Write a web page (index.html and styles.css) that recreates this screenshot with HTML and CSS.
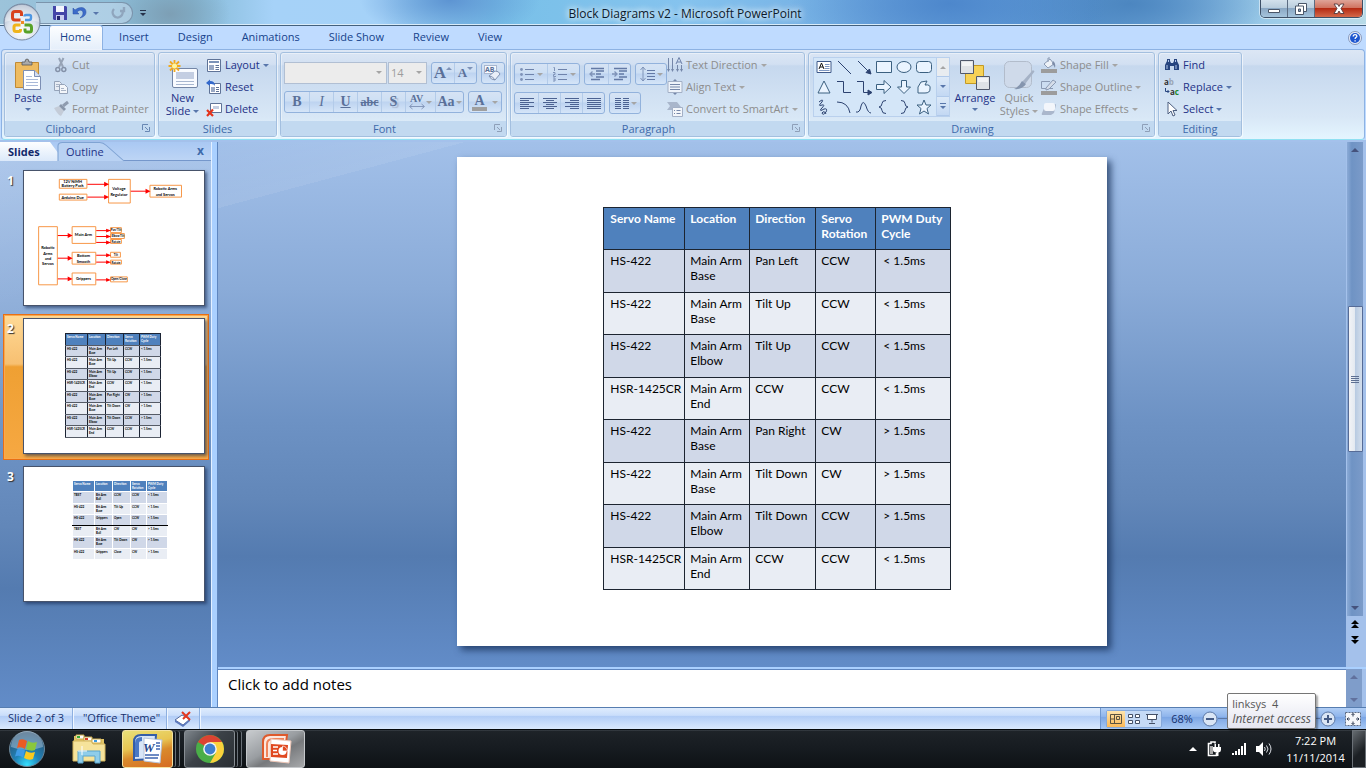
FILE: index.html
```html
<!DOCTYPE html>
<html lang="en">
<head>
    <meta charset="UTF-8">
    <meta name="viewport" content="width=device-width, initial-scale=1.0">
    <title>Block Diagrams v2 - Microsoft PowerPoint</title>
    <link rel="stylesheet" href="styles.css">
</head>
<body>
    <!-- Title bar -->
    <header class="titlebar">
        <div class="quick-access">
            <button class="qa-btn" aria-label="Save"><svg width="14" height="14" viewBox="0 0 14 14"><path d="M0 0h13l1 1v13H1l-1-1z" fill="#4345a8"/><path d="M3 0h8v6H3z" fill="#f4f5fd"/><path d="M3 9h8v5H3z" fill="#c9cdf0"/><path d="M4 10h3v4H4z" fill="#23256e"/></svg></button>
            <button class="qa-btn" aria-label="Undo"><svg width="14" height="14" viewBox="0 0 14 14"><path d="M0 2v6h6L4 6c3-3 6-2 6 1 0 2-1 3-3 5 4-1 6-3 6-6 0-5-6-6-11-2z" fill="#3c6cc9" stroke="#2a4fa5" stroke-width=".5"/></svg></button>
            <span class="caret"></span>
            <button class="qa-btn redo" aria-label="Redo" disabled><svg width="14" height="14" viewBox="0 0 14 14"><path d="M3 3a5 5 0 1 0 8 1M13 1v4H9" fill="none" stroke="#8fa5bd" stroke-width="2.4"/></svg></button>
        </div>
        <button class="qa-more" aria-label="Customize Quick Access Toolbar"><span class="bar"></span><span class="caret dark"></span></button>
        <h1 class="window-title">Block Diagrams v2 - Microsoft PowerPoint</h1>
        <div class="window-buttons">
            <button class="win-btn" aria-label="Minimize"><svg width="14" height="12" viewBox="0 0 14 12"><path d="M1.500 6.500h11v3h-11z" fill="#fff" stroke="#4a5668"/></svg></button>
            <button class="win-btn" aria-label="Restore"><svg width="14" height="12" viewBox="0 0 14 12"><path d="M4.500.5h8v8h-8z" fill="#fff" stroke="#4a5668"/><path d="M1.500 3h8v8.500h-8z" fill="#fff" stroke="#4a5668"/><path d="M4.500 6h2v2.500h-2z" fill="#8fa5c0" stroke="#4a5668"/></svg></button>
            <button class="win-btn close" aria-label="Close"><svg width="14" height="12" viewBox="0 0 14 12"><path d="M2 1h3.500L7 3.500 8.500 1H12L9 5.500l3 5H8.500L7 8l-1.500 2.500H2l3-5z" fill="#fff" stroke="#54383c" stroke-width=".9"/></svg></button>
        </div>
    </header>

    <button class="office-btn" aria-label="Office Button">
        <svg width="38" height="38" viewBox="0 0 38 38">
            <defs>
                <radialGradient id="orb" cx=".5" cy=".75" r=".7"><stop offset="0" stop-color="#fff"/><stop offset=".6" stop-color="#dbe2ec"/><stop offset="1" stop-color="#9faec4"/></radialGradient>
            </defs>
            <circle cx="19" cy="19" r="18" fill="url(#orb)" stroke="#77879f"/>
            <path d="M2 19a17 17 0 0 1 34 0c-8-3-26-3-34 0z" fill="#fff" opacity=".4"/>
            <g fill="none" stroke-width="3">
                <path d="M17.500 17H12q-2.500 0-2.500-2.500V11q0-2.500 2.500-2.500h4.500q2 0 2 2V13" stroke="#d8411d"/>
                <path d="M22 17h4q2 0 2-2v-1.500q0-1.500-1.500-1.500H23q-1.500 0-1.500 1.500" stroke="#4f97e2" stroke-width="2.400"/>
                <path d="M17.500 22H13q-2 0-2 2v2.500q0 2 2 2h3q1.500 0 1.500-1.500v-1" stroke="#f0b41a"/>
                <path d="M21.500 22H26q2.500 0 2.500 2.500V27q0 2-2 2H24q-2 0-2-2v-1.500" stroke="#58a228"/>
            </g>
            <path d="M18 18h3v3h-3z" fill="#f08a28"/>
        </svg>
    </button>

    <!-- Ribbon tabs -->
    <nav class="tabs">
        <a href="#" class="tab active">Home</a>
        <a href="#" class="tab">Insert</a>
        <a href="#" class="tab">Design</a>
        <a href="#" class="tab">Animations</a>
        <a href="#" class="tab">Slide Show</a>
        <a href="#" class="tab">Review</a>
        <a href="#" class="tab">View</a>
        <button class="help-btn" aria-label="Help"><svg width="14" height="14" viewBox="0 0 14 14"><circle cx="7" cy="7" r="6.500" fill="#e6eefb" stroke="#8798bb"/><circle cx="7" cy="7" r="5" fill="#1d55cf"/><path d="M5.200 5.600q0-2 1.900-2 1.800 0 1.800 1.500 0 1-1.200 1.500-.6.300-.6 1.300M7.100 9.200v1.400" fill="none" stroke="#fff" stroke-width="1.300"/></svg></button>
    </nav>

    <!-- Ribbon -->
    <section class="ribbon">
        <div class="group clipboard">
            <div class="group-body">
                <button class="big-btn">
                    <svg width="28" height="32" viewBox="0 0 28 32"><path d="M1.500 3.500h23v25h-23z" fill="#eebb60" stroke="#c08a35"/><path d="M8 6V3h3q0-3 2-3t2 3h3v3z" fill="#aaa" stroke="#555" stroke-width=".8"/><path d="M9.500 11.500h11l6 6v13h-17z" fill="#fff" stroke="#7d8fb4"/><path d="M20.500 11.500v6h6" fill="#d5def0" stroke="#7d8fb4"/><path d="M12 17.500h6M12 20.500h12M12 23.500h12M12 26.500h12" stroke="#a9b9d8"/></svg>
                    <span>Paste</span><span class="caret"></span>
                </button>
                <div class="rows">
                    <button class="row-btn" disabled><svg class="ico" viewBox="0 0 16 16"><path d="M6 1l4 9M10.500 1L6 10" stroke="#97a3b6" stroke-width="2"/><circle cx="4.800" cy="12.500" r="2" fill="none" stroke="#8491a8" stroke-width="1.500"/><circle cx="10.800" cy="12.500" r="2" fill="none" stroke="#8491a8" stroke-width="1.500"/></svg>Cut</button>
                    <button class="row-btn" disabled><svg class="ico" viewBox="0 0 16 16"><path d="M1.500 2.500h5l2 2v7h-7z" fill="#e8edf5" stroke="#95a3b9"/><path d="M6.500 5.500h5l3 3v6h-8z" fill="#f3f6fa" stroke="#95a3b9"/><path d="M3 5.500h3M3 7.500h3M8 9.500h3M8 11.500h5" stroke="#a9b4c6"/></svg>Copy</button>
                    <button class="row-btn" disabled><svg class="ico" viewBox="0 0 16 16"><path d="M1 7l5-2 5 5-3 5q-3-1-7-8z" fill="#c4ccd8"/><path d="M6 5l5 5 2-2-5-5z" fill="#8996aa"/><path d="M10 5l5-4" stroke="#8f9cb0" stroke-width="3"/></svg>Format Painter</button>
                </div>
            </div>
            <div class="group-label">Clipboard<button class="launcher" aria-label="Clipboard options"><svg width="8" height="8" viewBox="0 0 8 8"><path d="M.5 6V.5H6M3 3l3 3M7.500 3v4.500H3" fill="none" stroke="#6887b3"/></svg></button></div>
        </div>

        <div class="group slides">
            <div class="group-body">
                <button class="big-btn">
                    <svg width="30" height="30" viewBox="0 0 30 30"><rect x="4.500" y="8.500" width="25" height="19" rx="1.500" fill="#f9fbff" stroke="#7486a6"/><path d="M8 12h18v7H8z" fill="#c4cee2"/><path d="M8 21.500h18M8 24.500h18" stroke="#a8b7d0"/><path d="M6.500 0v12M.5 6h12M2 1.500l9 9M11 1.500l-9 9" stroke="#f2a91d" stroke-width="1.800"/><circle cx="6.500" cy="6" r="2.500" fill="#fff59e"/></svg>
                    <span>New</span><span>Slide <span class="caret"></span></span>
                </button>
                <div class="rows">
                    <button class="row-btn"><svg class="ico" viewBox="0 0 16 16"><path d="M1.500 2.500h13v12h-13z" fill="#fff" stroke="#5f7397"/><path d="M3 4h10v2H3z" fill="#7c93b8"/><path d="M3 8h5v5H3z" fill="#9aa9c4"/><path d="M9.500 8.500H13M9.500 10.500H13M9.500 12.500H13" stroke="#5f7397"/></svg>Layout <span class="caret"></span></button>
                    <button class="row-btn"><svg class="ico" viewBox="0 0 16 16"><path d="M3.500 4.500h11v10h-11z" fill="#fff" stroke="#5f7397"/><path d="M5 8h4v5H5z" fill="#9aa9c4"/><path d="M10 8.500h3M10 10.500h3M10 12.500h3" stroke="#5f7397"/><path d="M0 4l4-3.500V2q5 0 5 5Q8 4.500 4 5v2z" fill="#3268cb"/></svg>Reset</button>
                    <button class="row-btn"><svg class="ico" viewBox="0 0 16 16"><path d="M4.500 2.500h11v9h-11z" fill="#fff" stroke="#5f7397"/><path d="M7 5h6v3H7z" fill="#c4cee2"/><path d="M1 9l6 6M7 8.500L1 15" stroke="#e3331b" stroke-width="2.200"/></svg>Delete</button>
                </div>
            </div>
            <div class="group-label">Slides</div>
        </div>

        <div class="group font">
            <div class="group-body stacked">
                <div class="tool-line">
                    <div class="combos">
                        <span class="combo name"><select aria-label="Font" disabled><option></option></select></span>
                        <span class="combo size"><select aria-label="Font Size" disabled><option>14</option></select></span>
                    </div>
                    <div class="btn-set">
                        <button class="tool" aria-label="Grow Font" disabled><span class="serif grow">A</span><span class="tri up"></span></button>
                        <button class="tool" aria-label="Shrink Font" disabled><span class="serif shrink">A</span><span class="tri down"></span></button>
                    </div>
                    <div class="btn-set">
                        <button class="tool" aria-label="Clear Formatting" disabled><svg width="18" height="18" viewBox="0 0 18 18"><rect x=".5" y="1.500" width="12" height="8" fill="#f6f8fc" stroke="#a8b7d0"/><text x="1" y="8" class="tiny-letters">AB</text><path d="M5 12l6-5q4 0 5 3l-5 6q-4 0-6-4z" fill="#e9eef8" stroke="#8192b2"/><path d="M5 12q4 0 6 4" fill="none" stroke="#8192b2"/></svg></button>
                    </div>
                </div>
                <div class="tool-line">
                    <div class="btn-set">
                        <button class="tool serif" disabled><b>B</b></button>
                        <button class="tool serif" disabled><i>I</i></button>
                        <button class="tool serif" disabled><u>U</u></button>
                        <button class="tool serif strike" disabled><s>abc</s></button>
                        <button class="tool serif shadow" disabled><b>S</b></button>
                        <button class="tool wide" aria-label="Character Spacing" disabled><svg width="16" height="16" viewBox="0 0 16 16"><text x="1" y="8" class="spacing-letters">AV</text><path d="M1 12.500h14M3.500 10l-3 2.500 3 2.500M12.500 10l3 2.500-3 2.500" fill="none" stroke="#8598bb"/></svg><span class="caret"></span></button>
                        <button class="tool wide serif case" disabled><span>Aa</span><span class="caret"></span></button>
                    </div>
                    <div class="btn-set">
                        <button class="tool color" aria-label="Font Color" disabled><span class="serif color-a">A</span><span class="caret"></span></button>
                    </div>
                </div>
            </div>
            <div class="group-label">Font<button class="launcher off" aria-label="Font options"><svg width="8" height="8" viewBox="0 0 8 8"><path d="M.5 6V.5H6M3 3l3 3M7.500 3v4.500H3" fill="none" stroke="#8e9fb8"/></svg></button></div>
        </div>

        <div class="group paragraph">
            <div class="group-body">
                <div class="stacked">
                    <div class="tool-line">
                        <div class="btn-set">
                            <button class="tool wide" aria-label="Bullets" disabled><svg class="ico" viewBox="0 0 16 16"><path d="M6 3.500h9M6 8.500h9M6 13.500h9" stroke="#6f83ab"/><circle cx="2.500" cy="3.500" r="1.400" fill="#7f93b8"/><circle cx="2.500" cy="8.500" r="1.400" fill="#7f93b8"/><circle cx="2.500" cy="13.500" r="1.400" fill="#7f93b8"/></svg><span class="caret"></span></button>
                            <button class="tool wide" aria-label="Numbering" disabled><svg class="ico" viewBox="0 0 16 16"><path d="M6 3.500h9M6 8.500h9M6 13.500h9" stroke="#6f83ab"/><path d="M1.500 1.500h1V5M1 6.500h2v2H1.500v2H4M1 12h2v3H1M1.500 13.500h1" fill="none" stroke="#7f93b8"/></svg><span class="caret"></span></button>
                        </div>
                        <div class="btn-set">
                            <button class="tool" aria-label="Decrease Indent" disabled><svg class="ico" viewBox="0 0 16 16"><path d="M2 2.500h13M7 5h8M7 8h5M7 11h8M2 13.500h9" stroke="#6379a5" stroke-width="1.500"/><path d="M6 8H1M3.500 5.500L1 8l2.500 2.500" fill="none" stroke="#7f93b8" stroke-width="1.300"/></svg></button>
                            <button class="tool" aria-label="Increase Indent" disabled><svg class="ico" viewBox="0 0 16 16"><path d="M2 2.500h13M7 5h8M7 8h5M7 11h8M2 13.500h9" stroke="#6379a5" stroke-width="1.500"/><path d="M0 8h5M2.500 5.500L5 8l-2.500 2.500" fill="none" stroke="#7f93b8" stroke-width="1.300"/></svg></button>
                        </div>
                        <div class="btn-set">
                            <button class="tool spacing" aria-label="Line Spacing" disabled><svg class="ico" viewBox="0 0 16 16"><path d="M7 4.500h8M7 7.500h8M7 10.500h8M7 13.500h8" stroke="#6379a5"/><path d="M3 1v14M.5 4L3 1l2.500 3M.5 12L3 15l2.500-3" fill="none" stroke="#7f93b8"/></svg><span class="caret"></span></button>
                        </div>
                    </div>
                    <div class="tool-line">
                        <div class="btn-set">
                            <button class="tool" aria-label="Align Left" disabled><svg class="ico" viewBox="0 0 16 16"><path d="M1 3.500h14M1 5.500h9M1 7.500h14M1 9.500h9M1 11.500h14M1 13.500h9" stroke="#4c6291"/></svg></button>
                            <button class="tool" aria-label="Center" disabled><svg class="ico" viewBox="0 0 16 16"><path d="M1 3.500h14M4 5.500h8M1 7.500h14M4 9.500h8M1 11.500h14M4 13.500h8" stroke="#4c6291"/></svg></button>
                            <button class="tool" aria-label="Align Right" disabled><svg class="ico" viewBox="0 0 16 16"><path d="M1 3.500h14M6 5.500h9M1 7.500h14M6 9.500h9M1 11.500h14M6 13.500h9" stroke="#4c6291"/></svg></button>
                            <button class="tool" aria-label="Justify" disabled><svg class="ico" viewBox="0 0 16 16"><path d="M1 3.500h14M1 5.500h14M1 7.500h14M1 9.500h14M1 11.500h14M1 13.500h14" stroke="#4c6291"/></svg></button>
                        </div>
                        <div class="btn-set">
                            <button class="tool spacing" aria-label="Columns" disabled><svg class="ico" viewBox="0 0 16 16"><path d="M1 3.500h6M1 5.500h6M1 7.500h6M1 9.500h6M1 11.500h6M1 13.500h6M9 3.500h6M9 5.500h6M9 7.500h6M9 9.500h6M9 11.500h6M9 13.500h6" stroke="#4c6291"/></svg><span class="caret"></span></button>
                        </div>
                    </div>
                </div>
                <div class="rows">
                    <button class="row-btn" disabled><svg class="ico" viewBox="0 0 16 16"><path d="M1.500 1v13M5.500 1v13M10.500 8v6M14.500 8v6" stroke="#7587a9"/><path d="M0 12l1.500 3L3 12zM4 12l1.500 3L7 12zM9 12l1.500 3 1.500-3zM13 12l1.500 3 1.500-3z" fill="#7587a9"/><path d="M9 7l3-6.500L15 7M10 5h4" fill="none" stroke="#6f83ab"/></svg>Text Direction <span class="caret"></span></button>
                    <button class="row-btn" disabled><svg class="ico" viewBox="0 0 16 16"><path d="M1 2.500h14v11H1z" fill="#eef3fa" stroke="#a3b0c6"/><path d="M3 5.500h10M3 8h10M3 10.500h10" stroke="#7587a9"/><path d="M6 2l2-2 2 2zM6 14l2 2 2-2z" fill="#7587a9"/></svg>Align Text <span class="caret"></span></button>
                    <button class="row-btn" disabled><svg class="ico" viewBox="0 0 16 16"><path d="M0 1h10l4 5-3 3H0l3-4z" fill="#a9b6cb"/><path d="M5.500 6.500h10v9h-10z" fill="#f3f6fa" stroke="#a3b0c6"/><path d="M7 9.500h1M9.500 9.500h4M7 12.500h1M9.500 12.500h4" stroke="#7587a9"/></svg>Convert to SmartArt <span class="caret"></span></button>
                </div>
            </div>
            <div class="group-label">Paragraph<button class="launcher off" aria-label="Paragraph options"><svg width="8" height="8" viewBox="0 0 8 8"><path d="M.5 6V.5H6M3 3l3 3M7.500 3v4.500H3" fill="none" stroke="#8e9fb8"/></svg></button></div>
        </div>

        <div class="group drawing">
            <div class="group-body">
                <div class="gallery">
                    <div class="shapes">
                        <button aria-label="Text Box"><svg viewBox="0 0 20 20"><path d="M3 4.500h14v11H3z" fill="#fff" stroke="#3f5a8a"/><path d="M5 12l2.500-6 2.500 6M6 10h3" fill="none" stroke="#111"/><path d="M11 7.500h4.500M11 9.500h4.500M11 11.500h4.500M5 13.500h10.500" stroke="#7d97c2"/></svg></button>
                        <button aria-label="Line"><svg viewBox="0 0 20 20"><path d="M4 4l13 13"/></svg></button>
                        <button aria-label="Arrow"><svg viewBox="0 0 20 20"><path d="M4 4l11 11"/><path d="M17 17l-5-1.500 3.500-3.500z" fill="#2c4270"/></svg></button>
                        <button aria-label="Rectangle"><svg viewBox="0 0 20 20"><path class="solid" d="M2.500 4.500h15v11h-15z"/></svg></button>
                        <button aria-label="Oval"><svg viewBox="0 0 20 20"><ellipse class="solid" cx="10" cy="10" rx="7" ry="5.500"/></svg></button>
                        <button aria-label="Rounded Rectangle"><svg viewBox="0 0 20 20"><rect class="solid" x="2.500" y="4.500" width="15" height="11" rx="3"/></svg></button>
                        <button aria-label="Triangle"><svg viewBox="0 0 20 20"><path class="solid" d="M10 4l6 12H4z"/></svg></button>
                        <button aria-label="Elbow Connector"><svg viewBox="0 0 20 20"><path d="M3 4.500h6.500v11H17"/></svg></button>
                        <button aria-label="Elbow Arrow"><svg viewBox="0 0 20 20"><path d="M3 4.500h6.500v11H15"/><path d="M14 13l4 2.500-4 2.500z" fill="#2c4270"/></svg></button>
                        <button aria-label="Right Arrow"><svg viewBox="0 0 20 20"><path class="solid" d="M2.500 7.500H10v-4l7 6.500-7 6.500v-4H2.500z"/></svg></button>
                        <button aria-label="Down Arrow"><svg viewBox="0 0 20 20"><path class="solid" d="M7.500 3.500h5V10h4L10 16.500 3.500 10h4z"/></svg></button>
                        <button aria-label="Freeform"><svg viewBox="0 0 20 20"><path class="solid" d="M4 16V10l3-5 6-1-2 4q6-1 5 4 0 4-5 4z"/></svg></button>
                        <button aria-label="Scribble"><svg viewBox="0 0 20 20"><path d="M5 5q5-4 3 0-5 5 0 3 4-1-1 4-2 3 3 0 4-1 2 3-3 4-4 1 2-3 4 1"/></svg></button>
                        <button aria-label="Arc"><svg viewBox="0 0 20 20"><path d="M3 5q11 0 13 11"/></svg></button>
                        <button aria-label="Curve"><svg viewBox="0 0 20 20"><path d="M2 15q4 1 5-6 2-7 5 0 2 7 5 7"/></svg></button>
                        <button aria-label="Left Brace"><svg viewBox="0 0 20 20"><path d="M12 3.500q-4 0-4 3T5 10q3 .5 3 3.500t4 3"/></svg></button>
                        <button aria-label="Right Brace"><svg viewBox="0 0 20 20"><path d="M7 3.500q4 0 4 3t3 3.500q-3 .5-3 3.500t-4 3"/></svg></button>
                        <button aria-label="Star"><svg viewBox="0 0 20 20"><path class="solid" d="M10 3l2 5h5l-4 3.500 1.500 5.500L10 14l-4.500 3L7 11.500 3 8h5z"/></svg></button>
                    </div>
                    <div class="gallery-scroll">
                        <button aria-label="Row up" disabled><span class="tri up"></span></button>
                        <button aria-label="Row down"><span class="caret"></span></button>
                        <button aria-label="More shapes"><span class="bar"></span><span class="caret"></span></button>
                    </div>
                </div>
                <button class="big-btn">
                    <svg width="30" height="30" viewBox="0 0 30 30"><path d="M5.500 5.500h18v18h-18z" fill="#f7d256" stroke="#c49a23"/><path d="M.5.5h13v13H.5z" fill="#dfe2e6" stroke="#50586a"/><path d="M2 2h10v4H2z" fill="#fff" opacity=".6"/><path d="M16.500 16.500h13v13h-13z" fill="#dfe2e6" stroke="#50586a"/><path d="M18 18h10v4H18z" fill="#fff" opacity=".6"/></svg>
                    <span>Arrange</span><span class="caret"></span>
                </button>
                <button class="big-btn" disabled>
                    <svg width="32" height="30" viewBox="0 0 32 30"><rect x="1.500" y="1.500" width="27" height="26" rx="5" fill="#cfdaea" stroke="#b2bccb"/><path d="M30 10l1.500 1.500-9 12-3-2z" fill="#a5b2c6"/><path d="M19 21l4 3q-4 6-12 5 5-2 8-8z" fill="#8595ae"/></svg>
                    <span>Quick</span><span>Styles <span class="caret"></span></span>
                </button>
                <div class="rows">
                    <button class="row-btn" disabled><svg class="ico" viewBox="0 0 16 16"><path d="M3 7l6-5 4 5-6 4z" fill="#eef2f8" stroke="#8b9ab3"/><path d="M7 5V1h2" fill="none" stroke="#8b9ab3"/><path d="M12 4q3 2 2 7-1-3-3-4z" fill="#7c8ca8"/><path d="M0 12h16v4H0z" fill="#9c9c9c"/></svg>Shape Fill <span class="caret"></span></button>
                    <button class="row-btn" disabled><svg class="ico" viewBox="0 0 16 16"><path d="M9 2.500H.5v7H12" fill="none" stroke="#8b9ab3"/><path d="M5 9l7-8 3 2-7 7-3 1z" fill="#d5dde9" stroke="#8b9ab3"/><path d="M0 12h16v4H0z" fill="#9c9c9c"/></svg>Shape Outline <span class="caret"></span></button>
                    <button class="row-btn" disabled><svg class="ico" viewBox="0 0 16 16"><path d="M5 3h9q1 0 1 1l-2 8-3 2H2q-2 0-1-2z" fill="#aab7cc"/><rect x="3" y="2" width="11" height="8" rx="2" fill="#f3f6fb"/></svg>Shape Effects <span class="caret"></span></button>
                </div>
            </div>
            <div class="group-label">Drawing<button class="launcher off" aria-label="Drawing options"><svg width="8" height="8" viewBox="0 0 8 8"><path d="M.5 6V.5H6M3 3l3 3M7.500 3v4.500H3" fill="none" stroke="#8e9fb8"/></svg></button></div>
        </div>

        <div class="group editing">
            <div class="group-body">
                <div class="rows">
                    <button class="row-btn"><svg class="ico" viewBox="0 0 16 16"><path d="M1 13V8l2-4V2h3v2l1 2h2l1-2V2h3v2l2 4v5h-5V9H6v4z" fill="#27457f"/><path d="M3 8v4M12 8v4M4.500 3v2M11.500 3v2" stroke="#b4c8ec"/></svg>Find</button>
                    <button class="row-btn"><svg class="ico" viewBox="0 0 16 16"><text x="0" y="6" class="replace-letters">a<tspan fill="#9aa5b5">b</tspan></text><text x="6" y="16" class="replace-letters">a<tspan fill="#1d8a2b">c</tspan></text><path d="M1.500 9v3.500H5M3.500 11L5 12.500 3.500 14" fill="none" stroke="#27457f"/></svg>Replace <span class="caret"></span></button>
                    <button class="row-btn"><svg class="ico" viewBox="0 0 16 16"><path d="M4 1v12l3-3 2 5 2-1-2-4.500h4z" fill="#fff" stroke="#4d5f80"/></svg>Select <span class="caret"></span></button>
                </div>
            </div>
            <div class="group-label">Editing</div>
        </div>
    </section>

    <!-- Workspace -->
    <main class="workspace">
        <aside class="pane">
            <div class="pane-tabs">
                <a href="#" class="pane-tab current">Slides</a>
                <a href="#" class="pane-tab"><svg class="tab-shape" viewBox="0 0 60 19" preserveAspectRatio="none"><path d="M0 19V4q0-3.500 4-3.500h34q3 0 6 3L60 19" fill="#b9d2f3" stroke="#7fa3d3"/></svg><span>Outline</span></a>
                <button class="pane-close" aria-label="Close pane">x</button>
            </div>
            <ol class="thumbs">
                <li class="thumb">
                    <span class="num">1</span>
                    <div class="page">
                        <svg class="diagram" viewBox="0 0 180 136">
                            <g class="boxes">
                                <path d="M34.500 8.500h28v9h-28zM34.500 23.500h28v6h-28zM84.500 8.500h22v24h-22zM126.500 14.500h32v12h-32zM13.500 56.500h19v59h-19zM47.500 56.500h24v17h-24zM47.500 82.500h24v12h-24zM47.500 103.500h24v12h-24zM86.500 57.500h11v5h-11zM86.500 63.500h14v5h-14zM86.500 69.500h11v4h-11zM86.500 82.500h10v5h-10zM86.500 90.500h11v4h-11zM86.500 107.500h17v5h-17z"/>
                            </g>
                            <path class="wires" d="M63 13.500h18M63 26.500h18M107 20.500h16M33 65.500h12M33 88.500h12M33 109.500h12M72 60.500h12M72 66.500h12M72 72.500h12M72 85.500h12M72 92.500h12M72 110.500h12"/>
                            <path class="heads" d="M80 11l5 2.500-5 2.500zM80 24l5 2.500-5 2.500zM122 18l5 2.500-5 2.500zM43 63l5 2.500-5 2.500zM43 86l5 2.500-5 2.500zM43 107l5 2.500-5 2.500zM82 58.500l5 2-5 2zM82 64.500l5 2-5 2zM82 70.500l5 2-5 2zM82 83.500l5 2-5 2zM82 90.500l5 2-5 2zM82 108.500l5 2-5 2z"/>
                            <g class="labels">
                                <text x="48" y="12">12V NiMH</text><text x="48" y="16">Battery Pack</text>
                                <text x="48" y="28">Arduino Due</text>
                                <text x="95" y="19">Voltage</text><text x="95" y="25">Regulator</text>
                                <text x="142" y="19">Robotic Arms</text><text x="142" y="25">and Servos</text>
                                <text x="23" y="79">Robotic</text><text x="23" y="85">Arms</text><text x="23" y="90">and</text><text x="23" y="95">Servos</text>
                                <text x="59" y="66">Main Arm</text>
                                <text x="59" y="87">Bottom</text><text x="59" y="93">Smooth</text>
                                <text x="59" y="111">Grippers</text>
                            </g>
                            <g class="labels small">
                                <text x="92" y="61">Pan/Tilt</text><text x="94" y="67">Elbow Tilt</text><text x="92" y="73">Rotate</text>
                                <text x="92" y="86">Tilt</text><text x="92" y="94">Rotate</text><text x="95" y="111">Open/Close</text>
                            </g>
                        </svg>
                    </div>
                </li>
                <li class="thumb selected">
                    <span class="num">2</span>
                    <div class="page">
                        <table class="mini grid">
                            <tr><th>Servo Name</th><th>Location</th><th>Direction</th><th>Servo Rotation</th><th>PWM Duty Cycle</th></tr>
                            <tr><td>HS-422</td><td>Main Arm Base</td><td>Pan Left</td><td>CCW</td><td>&lt; 1.5ms</td></tr>
                            <tr><td>HS-422</td><td>Main Arm Base</td><td>Tilt Up</td><td>CCW</td><td>&lt; 1.5ms</td></tr>
                            <tr><td>HS-422</td><td>Main Arm Elbow</td><td>Tilt Up</td><td>CCW</td><td>&lt; 1.5ms</td></tr>
                            <tr><td>HSR-1425CR</td><td>Main Arm End</td><td>CCW</td><td>CCW</td><td>&lt; 1.5ms</td></tr>
                            <tr><td>HS-422</td><td>Main Arm Base</td><td>Pan Right</td><td>CW</td><td>&gt; 1.5ms</td></tr>
                            <tr><td>HS-422</td><td>Main Arm Base</td><td>Tilt Down</td><td>CW</td><td>&gt; 1.5ms</td></tr>
                            <tr><td>HS-422</td><td>Main Arm Elbow</td><td>Tilt Down</td><td>CCW</td><td>&gt; 1.5ms</td></tr>
                            <tr><td>HSR-1425CR</td><td>Main Arm End</td><td>CCW</td><td>CCW</td><td>&lt; 1.5ms</td></tr>
                        </table>
                    </div>
                </li>
                <li class="thumb">
                    <span class="num">3</span>
                    <div class="page">
                        <table class="mini plain">
                            <tr><th>Servo Name</th><th>Location</th><th>Direction</th><th>Servo Rotation</th><th>PWM Duty Cycle</th></tr>
                            <tr><td>TBST</td><td>Btt Arm Ball</td><td>CCW</td><td>CCW</td><td>&lt; 1.5ms</td></tr>
                            <tr><td>HS-422</td><td>Btt Arm Base</td><td>Tilt Up</td><td>CCW</td><td>&lt; 1.5ms</td></tr>
                            <tr class="split"><td>HS-422</td><td>Grippers</td><td>Open</td><td>CCW</td><td>&lt; 1.5ms</td></tr>
                            <tr><td>TBST</td><td>Btt Arm Ball</td><td>CW</td><td>CW</td><td>&gt; 1.5ms</td></tr>
                            <tr><td>HS-422</td><td>Btt Arm Base</td><td>Tilt Down</td><td>CW</td><td>&gt; 1.5ms</td></tr>
                            <tr><td>HS-422</td><td>Grippers</td><td>Close</td><td>CW</td><td>&gt; 1.5ms</td></tr>
                        </table>
                    </div>
                </li>
            </ol>
        </aside>

        <div class="editor">
            <div class="stage-row">
                <div class="stage">
                    <div class="slide">
                        <table class="servo-table">
                            <colgroup><col class="c-name"><col class="c-loc"><col class="c-dir"><col class="c-rot"><col class="c-pwm"></colgroup>
                            <thead>
                                <tr><th>Servo Name</th><th>Location</th><th>Direction</th><th>Servo Rotation</th><th>PWM Duty Cycle</th></tr>
                            </thead>
                            <tbody>
                                <tr><td>HS-422</td><td>Main Arm Base</td><td>Pan Left</td><td>CCW</td><td>&lt; 1.5ms</td></tr>
                                <tr><td>HS-422</td><td>Main Arm Base</td><td>Tilt Up</td><td>CCW</td><td>&lt; 1.5ms</td></tr>
                                <tr><td>HS-422</td><td>Main Arm Elbow</td><td>Tilt Up</td><td>CCW</td><td>&lt; 1.5ms</td></tr>
                                <tr><td>HSR-1425CR</td><td>Main Arm End</td><td>CCW</td><td>CCW</td><td>&lt; 1.5ms</td></tr>
                                <tr><td>HS-422</td><td>Main Arm Base</td><td>Pan Right</td><td>CW</td><td>&gt; 1.5ms</td></tr>
                                <tr><td>HS-422</td><td>Main Arm Base</td><td>Tilt Down</td><td>CW</td><td>&gt; 1.5ms</td></tr>
                                <tr><td>HS-422</td><td>Main Arm Elbow</td><td>Tilt Down</td><td>CCW</td><td>&gt; 1.5ms</td></tr>
                                <tr><td>HSR-1425CR</td><td>Main Arm End</td><td>CCW</td><td>CCW</td><td>&lt; 1.5ms</td></tr>
                            </tbody>
                        </table>
                    </div>
                </div>
                <div class="scroll">
                    <div class="track">
                        <span class="tri up"></span>
                        <div class="thumb-bar"><span class="grip"></span></div>
                        <span class="tri down"></span>
                    </div>
                    <button class="jump" aria-label="Previous Slide"><span class="tri up"></span><span class="tri up"></span></button>
                    <button class="jump" aria-label="Next Slide"><span class="tri down"></span><span class="tri down"></span></button>
                </div>
            </div>
            <div class="notes-row">
                <textarea class="notes" aria-label="Notes" placeholder="Click to add notes"></textarea>
                <div class="notes-scroll"><span class="tri up"></span><span class="tri down"></span></div>
            </div>
        </div>
    </main>

    <!-- Status bar -->
    <footer class="statusbar">
        <span class="status-item">Slide 2 of 3</span>
        <span class="status-item theme">"Office Theme"</span>
        <button class="status-item spell" aria-label="Spelling"><svg width="18" height="16" viewBox="0 0 18 16"><path d="M1 9l7-5 8 4-7 6z" fill="#fff" stroke="#53699c"/><path d="M1 9v2l8 5 7-6V8l-7 6z" fill="#5d79bd"/><path d="M8 1l8 8M16 1L9 8" stroke="#e2371f" stroke-width="2"/></svg></button>
        <div class="view-tools">
            <div class="views">
                <button class="view on" aria-label="Normal"><svg width="12" height="10" viewBox="0 0 12 10"><path d="M.5.5h11v9H.5zM4.500.5v9M6.500 2.500h3v3h-3zM.5 5h4" fill="none" stroke="#5b5340"/></svg></button>
                <button class="view" aria-label="Slide Sorter"><svg width="12" height="10" viewBox="0 0 12 10"><path d="M.5.5h4v3h-4zM7.500.5h4v3h-4zM.5 6.500h4v3h-4zM7.500 6.500h4v3h-4z" fill="#fff" stroke="#445067"/></svg></button>
                <button class="view" aria-label="Slide Show"><svg width="12" height="10" viewBox="0 0 12 10"><path d="M0 .5h12M1.500.5v5h9v-5M6 5.500v3M3 9.500h6" fill="#fff" stroke="#445067"/></svg></button>
            </div>
            <button class="zoom-value">68%</button>
            <button class="zoom-btn" aria-label="Zoom Out"><svg width="16" height="16" viewBox="0 0 16 16"><circle cx="8" cy="8" r="7" fill="#d9e5f5" stroke="#5c78a6"/><path d="M4 8h8" stroke="#445a84" stroke-width="2"/></svg></button>
            <input class="zoom-slider" type="range" min="10" max="400" value="68" aria-label="Zoom">
            <button class="zoom-btn" aria-label="Zoom In"><svg width="16" height="16" viewBox="0 0 16 16"><circle cx="8" cy="8" r="7" fill="#d9e5f5" stroke="#5c78a6"/><path d="M4 8h8M8 4v8" stroke="#445a84" stroke-width="2"/></svg></button>
            <button class="fit" aria-label="Fit to window"><svg width="16" height="14" viewBox="0 0 16 14"><rect x=".5" y=".5" width="15" height="13" fill="#f4f6fa" stroke="#5b6a85" stroke-dasharray="2 1"/><path d="M8 1.500v3M6.500 3L8 1.500 9.500 3M8 12.500v-3M6.500 11L8 12.500 9.500 11M2 7h3M3.500 5.500L2 7l1.500 1.500M14 7h-3M12.500 5.500L14 7l-1.500 1.500" fill="none" stroke="#303c55"/></svg></button>
        </div>
    </footer>

    <!-- Windows taskbar -->
    <div class="taskbar">
        <button class="start" aria-label="Start">
            <svg width="38" height="38" viewBox="0 0 38 38">
                <defs><radialGradient id="start" cx=".5" cy=".95" r=".9"><stop offset="0" stop-color="#35e0ff"/><stop offset=".4" stop-color="#2083b8"/><stop offset="1" stop-color="#2c4f6e"/></radialGradient></defs>
                <circle cx="19" cy="19" r="17.500" fill="url(#start)" stroke="#6c8698"/>
                <path d="M3 17a16 16 0 0 1 32 0q-16 6-32 0z" fill="#cfe2ef" opacity=".4"/>
                <path d="M11 10q4-2 8 1l-2 8q-4-3-8-1z" fill="#ec5b24"/><path d="M20 11q4 3 9 1l-2 8q-4 2-9-1z" fill="#8ac73c"/>
                <path d="M9 19.500q4-2 8 1l-2 7q-4-3-8-1z" fill="#3f9be6"/><path d="M18 21q4 3 9 1l-2 7q-4 2-9-1z" fill="#fbc91f"/>
            </svg>
        </button>
        <button class="task bare" aria-label="Windows Explorer">
            <svg width="34" height="32" viewBox="0 0 34 32"><path d="M2 3h9l2 3h19v22H2z" fill="#e2c566"/><path d="M4 2h8v4H4z" fill="#fff" stroke="#c9a94a"/><path d="M5 3h3v2H5z" fill="#35a835"/><path d="M12 4h8v4h-8z" fill="#fff" stroke="#c9a94a"/><path d="M13 5h3v2h-3z" fill="#d63b2a"/><path d="M20 6h9v4h-9z" fill="#fff" stroke="#c9a94a"/><path d="M22 7h3v2h-3z" fill="#3c9be0"/><path d="M1 8h18l2 3h12v17H1z" fill="#f6e39b" stroke="#d2b45c"/><path d="M6 30V18h22v12h-5v-7H11v7z" fill="#8fcdea" stroke="#5ba5cd"/><path d="M10 13v9M6 18h9" stroke="#fff"/></svg>
        </button>
        <button class="task word stack" aria-label="Microsoft Word">
            <svg width="32" height="32" viewBox="0 0 32 32"><path d="M2 27V9q0-7 7-7h15l-2 24z" fill="#d8e5f7" stroke="#345da8" stroke-width="2"/><path d="M5 24V10q0-4 5-4" fill="none" stroke="#4a78c5" stroke-width="4"/><path d="M12 5l18 2-2 23-16-2z" fill="#fff" stroke="#b7c4dc"/><text x="11" y="19" class="word-letter">W</text><path d="M24 10h4M24 13h4M24 16h4M13 22h14M13 25h13" stroke="#3f66b0" stroke-width="1.500"/></svg>
        </button>
        <button class="task stack" aria-label="Google Chrome">
            <svg width="30" height="30" viewBox="0 0 30 30"><circle cx="15" cy="15" r="14" fill="#4aae48"/><path d="M15 15L2.900 8a14 14 0 0 1 24.200 0z" fill="#dc4332"/><path d="M15 8h12.100A14 14 0 0 1 15 29l6-10.500z" fill="#fbd13c"/><circle cx="15" cy="15" r="6.800" fill="#f5f5f5"/><circle cx="15" cy="15" r="5.400" fill="#3e7fd0"/></svg>
        </button>
        <button class="task lit" aria-label="Microsoft PowerPoint">
            <svg width="32" height="32" viewBox="0 0 32 32"><path d="M3 26V9q0-7 7-7h17l-3 24z" fill="#fce7de" stroke="#de5a2c" stroke-width="2"/><path d="M7 24V11q0-5 6-5h11" fill="none" stroke="#f0835a" stroke-width="2"/><path d="M11 6l20 2-2 22-19-2z" fill="#fff" stroke="#edc5b5"/><path d="M11 11l17 1-1 13-16-1z" fill="#e0481f"/><path d="M13 14h5M13 17.500h4M13 21h5" stroke="#fff" stroke-width="1.500"/><circle cx="22.500" cy="18" r="4" fill="#fff"/><path d="M22.500 18v-5a5 5 0 0 1 5 5z" fill="#e0481f" stroke="#fff" stroke-width=".7"/></svg>
        </button>
        <div class="tray">
            <button aria-label="Show hidden icons"><span class="tri up"></span></button>
            <button aria-label="Power"><svg width="16" height="16" viewBox="0 0 16 16"><path d="M9 2.500V1H5v1.500H2.500v12h8V12" fill="none" stroke="#fff" stroke-width="1.600"/><path d="M4 5h3v8H4z" fill="#aaa"/><path d="M7 6h8v3q0 2-2.500 2.500V15h-2v-3.500Q7 11 7 9zM8.500 3h1.500v3H8.500zM12 3h1.500v3H12z" fill="#fff"/></svg></button>
            <button aria-label="Network"><svg width="16" height="12" viewBox="0 0 16 12"><path d="M1 10h2v2H1zM4 8h2v4H4zM7 6h2v6H7zM10 3h2v9h-2zM13 0h2v12h-2z" fill="#fff"/></svg></button>
            <button aria-label="Volume"><svg width="16" height="14" viewBox="0 0 16 14"><path d="M0 4h3l4-4v14l-4-4H0z" fill="#fff"/><path d="M8.500 5q1.500 2 0 4M10.500 3.500q3 3.500 0 7M13 1.500q4 5.500 0 11" fill="none" stroke="#dde1e6"/></svg></button>
        </div>
        <div class="clock"><time>7:22 PM</time><time>11/11/2014</time></div>
        <button class="show-desktop" aria-label="Show desktop"></button>
    </div>

    <div class="tooltip" role="tooltip"><span>linksys&nbsp; 4</span><em>Internet access</em></div>
</body>
</html>
```
FILE: styles.css
```css
:root {
    --text: #15428b;
    --navy: #1e3287;
    --off: #8d8d8d;
    --edge: #a3bfdf;
    --strip: #aad0ff;
    --desk: linear-gradient(180deg, #a2c0e9 0, #8aabd8 28%, #6d92c4 53%, #6287b9 68%, #547bb0 79%, #628cc8 100%);
}
* { margin: 0; padding: 0; box-sizing: border-box; }
body { display: flex; flex-direction: column; height: 100vh; overflow: hidden; background: #bfdbff; color: var(--text); font-family: "Open Sans", "Noto Sans", sans-serif; font-size: 11px; line-height: 14px; }
button, select, textarea { font: inherit; color: inherit; background: none; border: none; border-radius: 0; }
button { display: flex; align-items: center; justify-content: center; }
button:disabled { color: var(--off); }
a { color: inherit; text-decoration: none; }
svg { display: block; flex: none; overflow: visible; }
.ico { width: 16px; height: 16px; }
.caret { display: inline-block; flex: none; width: 0; border: 3px solid transparent; border-top-color: #5876ab; border-bottom: none; vertical-align: middle; }
.caret.dark { border-top-color: #26324a; }
button:disabled .caret { border-top-color: #a5a5a5; }
.tri { width: 0; border: 4px solid transparent; }
.tri.up { border-top: none; border-bottom-color: currentColor; }
.tri.down { border-bottom: none; border-top-color: currentColor; }
.bar { width: 6px; height: 1px; background: currentColor; }

/* title bar */
.titlebar { position: relative; display: flex; align-items: flex-start; height: 26px; padding-left: 36px; border-bottom: 1px solid #43617e; box-shadow: inset 0 -1px #d9ecfa; background: radial-gradient(ellipse 60px 40px at 170px 14px, #7d9fb5, transparent), radial-gradient(ellipse 90px 40px at 450px 0, #5d94d2, transparent), radial-gradient(ellipse 160px 60px at 950px 4px, #4d87cc, transparent), radial-gradient(ellipse 140px 50px at 1130px 4px, #4c86c0, transparent), linear-gradient(90deg, #9cc3da 0, #84b9d6 14%, #a6d2f8 20%, #a5d2f8 28%, #78c0e8 36%, #85c3ee 50%, #6fa9e0 65%, #5c98d3 80%, #9ccbe8 93%, #b8dbe8 100%); }
.quick-access { display: flex; align-items: center; gap: 6px; width: 97px; height: 22px; margin-top: 2px; padding-left: 17px; border: 1px solid #7b94ac; border-left: none; border-radius: 0 11px 11px 0; background: rgba(205, 224, 242, 0.5); }
.qa-btn.redo { margin-left: 6px; }
.qa-more { flex-direction: column; gap: 2px; width: 20px; height: 26px; color: #26324a; }
.window-title { flex: 1; padding: 6px 43px 0 0; color: #0c1a2c; font-size: 12px; font-weight: 400; line-height: 16px; text-align: center; text-shadow: 0 0 6px #fff, 0 0 8px #fff; }
.window-buttons { display: flex; margin-right: 3px; border: 1px solid #3d4f66; border-top: none; border-radius: 0 0 5px 5px; overflow: hidden; box-shadow: 0 0 0 1px rgba(255, 255, 255, 0.5); }
.win-btn { width: 27px; height: 17px; border-right: 1px solid #5b6c82; background: linear-gradient(#d3e1ec 0, #b7cbdc 50%, #8ba8c4 50%, #a5c4dc 100%); }
.win-btn.close { width: 47px; border: none; background: linear-gradient(#dfa498 0, #cf6f5b 50%, #b52b13 50%, #d4694b 100%); }
.office-btn { position: absolute; left: 3px; top: 3px; z-index: 2; }

/* ribbon tabs */
.tabs { display: flex; align-items: flex-end; height: 23px; padding: 0 5px 0 49px; background: #bfdbff; color: var(--text); }
.tab { padding: 3px 15px 5px 14px; line-height: 14px; }
.tab.active { position: relative; margin-bottom: -1px; padding: 4px 11px 6px 10px; border: 1px solid #8db2e3; border-bottom: none; border-radius: 3px 3px 0 0; background: linear-gradient(#fdfeff, #e4eefa); box-shadow: inset 0 0 2px #fff; }
.tab.active + .tab { padding-left: 16px; }
.help-btn { margin: 0 -1px 4px auto; }

/* ribbon */
.ribbon { display: flex; gap: 3px; height: 91px; margin: 0 1px; padding: 2px; border: 1px solid #8db2e3; border-bottom-color: #8fe0f2; border-radius: 4px; background: linear-gradient(#dce7f5 0, #d2e0f2 16%, #c6d8ee 18%, #d8e7f6 75%, #e4f5ff 100%); }
.group { display: flex; flex-direction: column; flex: none; height: 85px; border: 1px solid var(--edge); border-radius: 3px; box-shadow: inset 1px 1px rgba(255, 255, 255, 0.4), 1px 1px rgba(255, 255, 255, 0.6); overflow: hidden; }
.group-body { display: flex; flex: 1; padding-top: 1px; }
.group-label { position: relative; height: 15px; background: #c2d9f0; color: #3e6aaa; line-height: 15px; text-align: center; padding-right: 18px; }
.launcher { position: absolute; right: 4px; top: 3px; }
.clipboard { width: 151px; }
.slides { width: 119px; }
.font { width: 227px; }
.paragraph { width: 295px; }
.drawing { width: 347px; }
.editing { width: 84px; }
.slides .group-label, .editing .group-label { padding-right: 0; }
.big-btn { flex-direction: column; justify-content: flex-start; gap: 0; width: 46px; padding-top: 5px; color: var(--navy); line-height: 13px; }
.big-btn svg { height: 32px; }
.big-btn > .caret { margin-top: 4px; }
.big-btn .caret { vertical-align: 2px; }
.slides .big-btn { width: 47px; }
.rows { display: flex; flex-direction: column; }
.row-btn { justify-content: flex-start; gap: 3px; height: 22px; padding: 0; color: var(--navy); white-space: nowrap; }
.clipboard .rows { padding-left: 2px; }
.editing .rows { padding-left: 5px; }

/* font and paragraph tools */
.stacked { display: flex; flex-direction: column; gap: 7px; padding: 9px 0 0 3px; }
.tool-line { display: flex; gap: 4px; }
.btn-set { display: flex; height: 22px; border: 1px solid #92b2dc; border-radius: 3px; background: linear-gradient(#d6e3f4 0, #cddff4 45%, #bdd3f0 50%, #d5e5f8 100%); }
.btn-set .tool + .tool { border-left: 1px solid #b3cbe9; }
.tool { width: 23px; height: 20px; gap: 2px; }
.tool + .tool { width: 22px; }
.tool.wide, .tool.wide + .tool.wide { width: 32px; }
.tool.spacing { width: 30px; gap: 1px; }
.font .tool { width: 24px; }
.font .tool-line:first-child .tool { width: 22px; }
.font .tool.wide { width: 30px; gap: 1px; }
.font .tool.wide.case { width: 28px; }
.font .tool.color { width: 32px; gap: 5px; }
.serif { color: #5a7099; font-family: "Liberation Serif", serif; font-size: 14px; line-height: 16px; font-weight: 700; }
button.serif:disabled { color: #5a7099; }
.serif i { font-weight: 400; }
.serif.grow { font-size: 17px; }
.serif.shrink { font-size: 13px; }
.tool .tri { border-width: 3px; align-self: flex-start; margin-top: 4px; margin-left: -2px; color: #7f93b8; }
.tool .tri.up { border-top: none; }
.tool .tri.down { border-bottom: none; }
.tool.strike { font-size: 12px; }
.tool.shadow { text-shadow: 2px 2px 1px #a9b6cf; }
.color-a { border-bottom: 4px solid #9f9f9f; padding: 0 2px; line-height: 13px; }
.tiny-letters { font: 700 7px "Open Sans", sans-serif; fill: #5a7099; }
.spacing-letters { font: 700 10px "Liberation Serif", serif; fill: #5a7099; }
.replace-letters { font: 700 8px "Open Sans", sans-serif; fill: #333; }
.combos { display: flex; gap: 1px; }
.combo { position: relative; height: 22px; border: 1px solid #b1bfd3; background: #ececec; }
.combo::after { content: ""; position: absolute; right: 4px; top: 8px; border: 3px solid transparent; border-top-color: #a5a5a5; border-bottom: none; }
.combo select { width: 100%; height: 100%; padding-left: 2px; appearance: none; color: #9c9c9c; opacity: 1; font-size: 11px; }
.combo.name { width: 103px; }
.combo.size { width: 39px; }

/* drawing gallery */
.gallery { display: flex; width: 137px; height: 60px; margin: 3px 3px 0 4px; border: 1px solid #b9d0ed; background: #d4e6f8; }
.shapes { display: grid; grid-template-columns: repeat(6, 20px); grid-auto-rows: 20px; width: 122px; margin-top: -1px; }
.shapes svg { width: 20px; height: 20px; fill: none; stroke: #2c4270; stroke-width: 1; }
.shapes .solid { fill: #eaf4ff; stroke: #3b6080; }
.gallery-scroll { display: flex; flex: 1; flex-direction: column; border-left: 1px solid #b9d0ed; color: #5876ab; }
.gallery-scroll button { flex: 1; flex-direction: column; gap: 2px; background: linear-gradient(#dce9f8, #c3d8f3); border-bottom: 1px solid #b0c9ea; }
.gallery-scroll button:disabled { background: #e8ecf0; color: #a5a5a5; }
.gallery-scroll .tri { border-width: 3px; border-top: none; }
.drawing .big-btn { width: 44px; }

/* workspace */
.workspace { display: flex; flex: 1; min-height: 0; padding-top: 2px; background: #a4c1eb; }
.pane { display: flex; flex-direction: column; width: 212px; background: var(--desk); }
.pane-tabs { display: flex; height: 19px; background: linear-gradient(#a9c8f3, #bdd5f5); border-bottom: 1px solid #7597cb; color: var(--navy); font-size: 12px; }
.pane-tab { position: relative; padding: 2px 0 0 8px; line-height: 16px; }
.pane-tab.current { width: 64px; height: 19px; background: linear-gradient(#fdfeff, #dce9fa); clip-path: polygon(0 0, 50px 0, 64px 100%, 0 100%); font-size: 11px; font-weight: 700; color: #12296b; }
.tab-shape { position: absolute; left: -6px; top: 0; width: 66px; height: 19px; }
.pane-tab:nth-child(2) { padding-left: 2px; font-size: 11px; }
.pane-tab span { position: relative; }
.pane-close { margin: 0 8px 0 auto; color: #3e6aaa; font-weight: 700; }
.thumbs { flex: 1; list-style: none; padding-top: 5px; background: linear-gradient(160deg, rgba(255, 255, 255, 0.15), transparent 40%); }
.thumb { display: flex; margin: 0 3px 2px; padding: 4px 4px 6px; }
.thumb.selected { padding: 3px 3px 5px; border: 1px solid #e86f14; background: linear-gradient(#ffd996 0, #f7c071 34%, #efa033 36%, #f6a842 100%); box-shadow: inset 0 0 0 1px #f9a94e; }
.num { width: 16px; padding-top: 4px; color: #fff; font-size: 12px; font-weight: 700; text-shadow: 1px 1px 1px #333; }
.page { flex: 1; height: 136px; border: 1px solid #47536b; background: #fff; box-shadow: 2px 2px 3px rgba(20, 40, 80, 0.6); overflow: hidden; }
.diagram { width: 100%; height: 100%; }
.boxes { fill: #fff; stroke: #f79646; }
.wires { fill: none; stroke: #f00; }
.heads { fill: #f00; }
.labels { fill: #000; font: 700 4px "Lato", sans-serif; text-anchor: middle; }
.labels.small { font-size: 3px; }
.mini { width: 96px; table-layout: fixed; border-collapse: collapse; color: #000; font: 700 3px/4px "Lato", sans-serif; text-align: left; }
.mini th, .mini td { padding: 1px 1px 0; vertical-align: top; background: #d0d8e8; }
.mini th { background: #4f81bd; color: #fff; }
.mini th:first-child { width: 22px; }
.mini th:nth-child(4) { width: 16px; }
.mini th:nth-child(5) { width: 21px; }
.mini tr:nth-child(odd) td { background: #e9edf4; }
.mini.grid { height: 105px; margin: 14px 0 0 41px; }
.mini.grid tr { height: 11px; }
.mini.grid th, .mini.grid td { border: 1px solid #1b2333; border-bottom-color: #555b66; }
.mini.plain { height: 80px; margin: 13px 0 0 48px; }
.mini.plain tr { height: 11px; }
.mini.plain th, .mini.plain td { border: 1px solid #fff; }
.mini.plain .split td { border-bottom: 1px solid #000; }

.editor { display: flex; flex: 1; flex-direction: column; min-width: 0; margin-left: 5px; border-left: 1px solid #5f86bf; box-shadow: -5px 0 var(--strip), -6px 0 #e4f0ff; }
.stage-row { display: flex; flex: 1; min-height: 0; }
.stage { flex: 1; display: flex; justify-content: center; align-items: flex-start; padding-top: 15px; background: linear-gradient(165deg, rgba(90, 135, 195, 0) 0, rgba(255, 255, 255, 0.08) 8%, transparent 8%), var(--desk); }
.slide { width: 57.6%; aspect-ratio: 650 / 489; padding-top: 50px; background: #fff; box-shadow: 4px 4px 7px rgba(20, 45, 85, 0.75); }
.servo-table { width: 348px; height: 383px; margin-left: 22.5%; table-layout: fixed; border-collapse: collapse; color: #000; font: 12px/15px "Lato", sans-serif; text-align: left; }
.servo-table thead tr { height: 42px; }
.servo-table th, .servo-table td { padding: 3px 5px 0; vertical-align: top; border: 1px solid #1c2430; }
.servo-table td { background: #e9edf4; }
.servo-table tbody tr:nth-child(odd) td { background: #d0d8e8; }
.servo-table th { background: #4f81bd; color: #fff; font-weight: 700; }
.servo-table tr > :first-child { padding: 3px 0 0 6px; }
.servo-table td:last-child { padding-left: 7px; }
.c-name { width: 81px; }
.c-loc { width: 65px; }
.c-dir { width: 66px; }
.c-rot { width: 60px; }
.scroll { display: flex; flex-direction: column; width: 20px; padding: 0 3px 19px 1px; background: #a4c1eb; color: #000; }
.track { display: flex; flex: 1; flex-direction: column; align-items: center; justify-content: space-between; padding: 6px 0; background: linear-gradient(90deg, #8aaad6, #6f93c4 30%, #7b9bc9); color: #45527c; }
.thumb-bar { display: flex; align-items: center; justify-content: center; width: 15px; height: 146px; border: 1px solid #566b96; border-radius: 1px; background: linear-gradient(90deg, #f2f3f6 0, #e3e9f1 45%, #b9cbe2 50%, #d3deec 100%); }
.grip { width: 8px; height: 7px; background: repeating-linear-gradient(#5d6f92 0 1px, transparent 1px 2px); }
.jump { flex-direction: column; height: 16px; }
.notes-row { display: flex; height: 40px; border-top: 2px solid var(--strip); background: #a4c1eb; padding-right: 4px; }
.notes { flex: 1; height: 38px; padding: 4px 10px; border-top: 1px solid #5f86bf; background: #fff; color: #000; font-size: 15px; line-height: 20px; resize: none; outline: none; overflow: hidden; }
.notes::placeholder { color: #000; opacity: 1; }
.notes-scroll { display: flex; flex-direction: column; align-items: center; justify-content: space-between; width: 16px; padding: 6px 0 5px; background: #7f9dca; color: #61719d; }

/* status bar */
.statusbar { display: flex; height: 22px; border-top: 1px solid #567db0; background: linear-gradient(#dfecfd 0, #cadefb 35%, #b2cdf6 40%, #d9e8fd 100%); color: #15306d; line-height: 19px; }
.status-item { padding: 0 8px; border-right: 1px solid #8eb0e0; box-shadow: 1px 0 #eff6ff; }
.status-item.theme { padding-right: 6px; padding-left: 10px; }
.status-item.spell { padding: 0 7px; }
.view-tools { display: flex; align-items: center; margin-left: auto; padding: 0 5px; border-left: 1px solid #6f97d0; background: linear-gradient(#b1cef5 0, #8fb5ec 40%, #7da7e5 45%, #a7c8f4 100%); }
.views { display: flex; border: 1px solid #86a9da; border-radius: 2px; background: #c5daf6; }
.view { width: 18px; height: 16px; }
.view.on { background: linear-gradient(#fde4ad, #fbb958); }
.zoom-value { width: 40px; }
.zoom-btn { width: 16px; }
.zoom-slider { width: 102px; height: 16px; appearance: none; background: linear-gradient(#5c78a6, #5c78a6) center / 100% 1px no-repeat; }
.zoom-slider::-webkit-slider-thumb { appearance: none; width: 8px; height: 14px; border: 1px solid #5c78a6; background: #e4edf8; }
.fit { margin-left: 9px; }

/* taskbar */
.taskbar { display: flex; height: 39px; border-top: 1px solid #05080b; background: linear-gradient(180deg, #3b4248 0, #1e2328 4%, #161b20 50%, #0e1215 100%); color: #fff; }
.start { width: 54px; height: 38px; }
.task { height: 38px; width: 51px; margin-right: 11px; border: 1px solid #888e94; border-radius: 3px; background: linear-gradient(135deg, #7f868c 0, #3b4147 45%, #2a2f34 100%); }
.task.bare { width: 58px; margin: 0 10px 0 0; padding-left: 12px; border: none; background: none; }
.task.stack { box-shadow: 3px 0 0 -1px #15191d, 4px 0 0 -1px #697077, 7px 0 0 -1px #15191d, 8px 0 0 -1px #697077; }
.task.word { background: linear-gradient(165deg, #e9e07a 0, #e8c552 40%, #d98a2c 60%, #d66b22 100%); border-color: #f4e2a2; }
.task.lit { width: 59px; border-color: #c5c8cb; background: linear-gradient(150deg, #c8cbce 0, #999da1 45%, #77797c 60%, #a7a9ab 100%); }
.word-letter { font: italic 700 13px "Liberation Serif", serif; fill: #27498f; }
.tray { display: flex; align-items: center; gap: 9px; margin: 0 7px 0 auto; }
.clock { display: flex; flex-direction: column; justify-content: center; width: 73px; font-size: 11px; line-height: 17px; text-align: center; }
.show-desktop { width: 14px; border: 1px solid #6b7177; background: linear-gradient(135deg, #656b70, #1c2024 60%); }

.tooltip { position: absolute; right: 50px; bottom: 39px; display: flex; flex-direction: column; padding: 2px 4px; border: 1px solid #767676; border-radius: 2px; background: linear-gradient(#fff, #e4e5f0); color: #575757; box-shadow: 2px 2px 2px rgba(0, 0, 0, 0.35); line-height: 15px; white-space: nowrap; }
.tooltip em { font-size: 12px; }
```
